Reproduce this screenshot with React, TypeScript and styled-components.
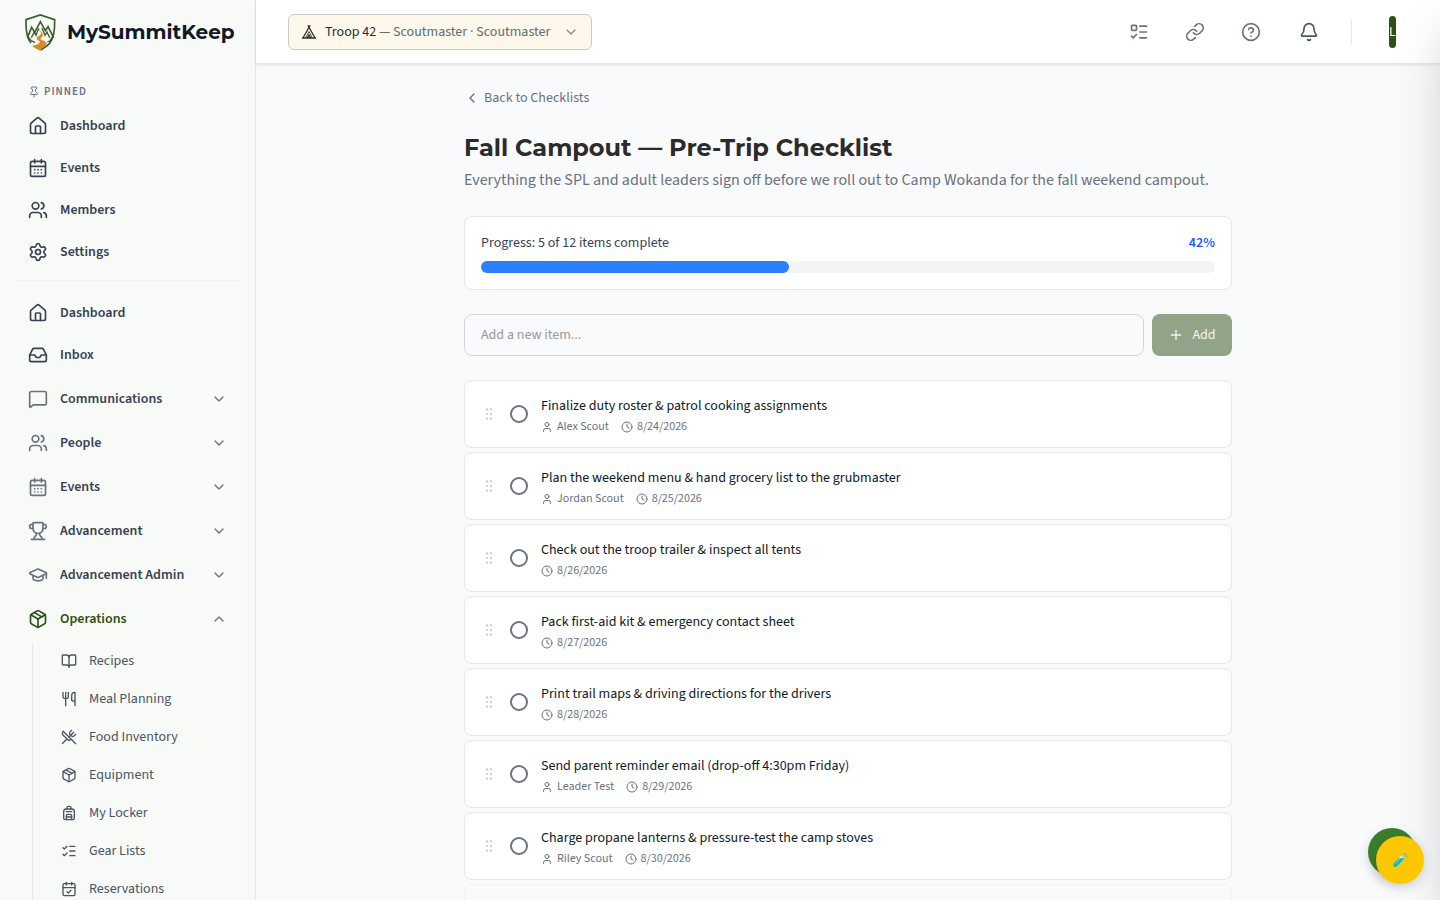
import React from "react";
import styled, { createGlobalStyle } from "styled-components";
import {
  Backpack, Bell, BookOpen, CalendarCheck, CalendarDays, ChevronDown, ChevronLeft, ChevronUp,
  CircleQuestionMark, Clock, GraduationCap, GripVertical, House, Inbox, Link as LinkIcon,
  ListChecks, ListTodo, MessageSquare, Package, Pin, Plus, Settings, Trophy, User, Users,
  Utensils, UtensilsCrossed,
} from "lucide-react";
import type { LucideIcon } from "lucide-react";

const bodyFont = `"Source Sans 3", "Noto Sans CJK SC", "Noto Sans", sans-serif`;
const headingFont = `Montserrat, Inter, sans-serif`;

const GlobalStyle = createGlobalStyle`
  *, *::before, *::after { box-sizing: border-box; }
  body { margin: 0; background: #f9fafb; font-family: ${bodyFont}; font-size: 14px; line-height: 20px; color: #101828; }
  button, input { font: inherit; color: inherit; }
  h1, p, ul { margin: 0; padding: 0; }
  ul { list-style: none; }
  a { color: inherit; text-decoration: none; }
  svg { flex-shrink: 0; display: block; }
`;

const Shell = styled.div`
  display: flex;
  height: 100vh;
  overflow: hidden;
`;

const Sidebar = styled.aside`
  display: flex;
  flex-direction: column;
  flex: 0 0 256px;
  background: #f8faf7;
  border-right: 1px solid #e5e7eb;
`;

const Brand = styled.a`
  display: flex;
  align-items: center;
  gap: 11px;
  flex: 0 0 64px;
  padding-left: 24px;
  font-family: ${headingFont};
  font-size: 20px;
  line-height: 28px;
  font-weight: 700;
  color: #101828;
`;

const Nav = styled.nav`
  flex: 1;
  min-height: 0;
  overflow-y: auto;
  scrollbar-width: none;
  padding: 20px 16px;
`;

const PinnedLabel = styled.div`
  display: flex;
  align-items: center;
  gap: 4px;
  padding-left: 12px;
  margin-bottom: 6px;
  font-size: 11px;
  line-height: 16px;
  font-weight: 600;
  letter-spacing: 1px;
  color: #6a7282;
`;

const NavList = styled.ul`
  display: flex;
  flex-direction: column;
  gap: 2px;
`;

const NavLink = styled.a`
  display: flex;
  align-items: center;
  gap: 12px;
  height: 40px;
  padding: 0 12px;
  font-weight: 600;
  color: #364153;
`;

const Divider = styled.hr`
  margin: 8px 0 12px;
  border: 0;
  border-top: 1px solid #f0f2f1;
`;

const GroupButton = styled.button<{ $open?: boolean }>`
  display: flex;
  align-items: center;
  gap: 12px;
  width: 100%;
  height: 44px;
  padding: 0 12px;
  border: 0;
  background: none;
  text-align: left;
  font-weight: 600;
  color: ${(p) => (p.$open ? "#2d5016" : "#364153")};

  svg { color: ${(p) => (p.$open ? "#2d5016" : "#6a7282")}; }
  svg:last-child { color: #6a7282; }
  span { flex: 1; }
`;

const GroupList = styled.div`
  margin-top: 2px;
`;

const SubList = styled(NavList)`
  margin: 2px 0 0 16px;
  padding-left: 16px;
  border-left: 1px solid #e5e7eb;
`;

const SubLink = styled.a`
  display: flex;
  align-items: center;
  gap: 12px;
  height: 36px;
  padding: 0 12px;
  color: #4a5565;
`;

const Page = styled.div`
  display: flex;
  flex-direction: column;
  flex: 1;
  min-width: 0;
`;

const Header = styled.header`
  display: flex;
  align-items: center;
  justify-content: space-between;
  flex: 0 0 64px;
  padding: 0 32px;
  background: #fff;
  border-bottom: 1px solid #e5e7eb;
  box-shadow: 0 1px 3px rgba(0, 0, 0, 0.1);
  z-index: 1;
`;

const TroopButton = styled.button`
  display: flex;
  align-items: center;
  gap: 8px;
  min-width: 304px;
  height: 36px;
  padding: 0 12px;
  border: 1px solid #c8cbc9;
  border-radius: 6px;
  background: #fdf8eb;
  color: #5f6f6b;
  text-align: left;

  span { flex: 1; }
  strong { font-weight: 400; color: #2b2b2b; }
  svg:last-child { color: #8a8a86; }
`;

const HeaderActions = styled.div`
  display: flex;
  align-items: center;
  gap: 16px;
`;

const IconButton = styled.button<{ $wide?: boolean }>`
  display: grid;
  place-items: center;
  width: ${(p) => (p.$wide ? 44 : 40)}px;
  height: 40px;
  padding: 0;
  border: 0;
  background: none;
  color: ${(p) => (p.$wide ? "#4a5565" : "#6a7282")};
`;

const Separator = styled.span`
  width: 1px;
  height: 24px;
  margin-left: 4px;
  background: #e5e7eb;
`;

const AccountButton = styled.button`
  padding: 0 12px 0 21px;
  border: 0;
  background: none;
`;

const Avatar = styled.span`
  display: flex;
  align-items: center;
  justify-content: center;
  width: 7px;
  height: 32px;
  border-radius: 4px;
  overflow: hidden;
  background: #2d5016;
  color: #fff;
`;

const Main = styled.main`
  flex: 1;
  min-height: 0;
  overflow-y: auto;
  scrollbar-width: none;
  padding: 24px 32px;
  background: #f9fafc;
`;

const Content = styled.div`
  display: flex;
  flex-direction: column;
  max-width: 768px;
  margin: 0 auto;
`;

const BackLink = styled.a`
  display: flex;
  align-items: center;
  align-self: flex-start;
  gap: 4px;
  color: #6a7282;
`;

const Title = styled.h1`
  margin-top: 24px;
  font-family: ${headingFont};
  font-size: 24px;
  line-height: 32px;
  font-weight: 700;
  color: #2b2b2b;
`;

const Subtitle = styled.p`
  margin-top: 4px;
  font-size: 16px;
  line-height: 24px;
  color: #6a7282;
`;

const ProgressCard = styled.section`
  margin-top: 24px;
  padding: 16px;
  border: 1px solid #e5e7eb;
  border-radius: 8px;
  background: #fff;
`;

const ProgressHead = styled.div`
  display: flex;
  justify-content: space-between;
  margin-bottom: 8px;
  color: #364153;

  strong { font-weight: 600; color: #155dfc; }
`;

const Track = styled.div`
  height: 12px;
  border-radius: 6px;
  background: #f3f4f6;
`;

const Fill = styled.div`
  height: 100%;
  border-radius: 6px;
  background: #2b7fff;
`;

const AddForm = styled.form`
  display: flex;
  gap: 8px;
  margin: 24px 0;
`;

const AddInput = styled.input`
  flex: 1;
  min-width: 0;
  height: 42px;
  padding: 0 16px;
  border: 1px solid #d1d5dc;
  border-radius: 8px;
  background: transparent;

  &::placeholder { color: #999; opacity: 1; }
`;

const AddButton = styled.button`
  display: flex;
  align-items: center;
  justify-content: center;
  gap: 8px;
  width: 80px;
  border: 0;
  border-radius: 8px;
  background: #91a488;
  color: #f3f5f2;
`;

const TaskList = styled.ul`
  display: flex;
  flex-direction: column;
  gap: 4px;
`;

const TaskRow = styled.li<{ $done?: boolean }>`
  display: flex;
  align-items: center;
  gap: 12px;
  height: 68px;
  padding: 0 16px;
  border: 1px solid ${(p) => (p.$done ? "#f0f2f4" : "#e5e7eb")};
  border-radius: 8px;
  background: ${(p) => (p.$done ? "#f9fafb" : "#fff")};

  > svg { color: #d1d5dc; }
`;

const Check = styled.input`
  appearance: none;
  flex: none;
  width: 18px;
  height: 18px;
  margin: 1px;
  border: 2px solid #6a7282;
  border-radius: 50%;
`;

const TaskBody = styled.div`
  display: flex;
  flex-direction: column;
  gap: 3px;
  padding-top: 3px;
`;

const Meta = styled.div`
  display: flex;
  gap: 12px;
  font-size: 12px;
  line-height: 16px;
  color: #6a7282;

  span { display: flex; align-items: center; gap: 4px; }
`;

const Drawer = styled.div`
  position: fixed;
  top: 0;
  bottom: 0;
  left: 100%;
  width: 384px;
  z-index: 5;
  box-shadow: 0 25px 50px -12px rgba(0, 0, 0, 0.25);
`;

const FloatingButton = styled.button<{ $back?: boolean }>`
  position: fixed;
  right: ${(p) => (p.$back ? 24 : 16)}px;
  bottom: ${(p) => (p.$back ? 24 : 16)}px;
  z-index: 6;
  display: grid;
  place-items: center;
  width: 48px;
  height: 48px;
  padding: 0;
  border: 0;
  border-radius: 50%;
  background: ${(p) => (p.$back ? "#3a7d2c" : "#fdc700")};
  box-shadow: 0 4px 12px rgba(0, 0, 0, 0.15);
`;

function Logo() {
  return (
    <svg width="32" height="38" viewBox="12 14 96 114" fill="none" stroke="#3b5f2a" aria-hidden="true">
      <path d="M33 104C22 92 17 70 18 34l43-14 43 14c1 36-4 58-16 72-8 9-17 14-26 19" strokeWidth="5" />
      <path d="m22 88 13-31 9 15 17-32 15 27 8-12 17 33" strokeWidth="5" />
      <path d="m34 88 9-17 5 10 8-21M66 60l9 21 6-10 8 17" strokeWidth="4" />
      <path d="m25 86 9 12 11 4M98 86l-9 12-7 3" strokeWidth="4" />
      <path d="M57 60c-2 9 10 11 5 18-3 5-15 8-11 15 3 5 12 5 7 11-4 5-14 6-22 8 7 6 15 11 26 15 0-9 21-13 17-24-3-8-18-7-17-12 1-4 9-7 6-15-2-6-10-8-11-16Z" fill="#d98a27" stroke="none" />
    </svg>
  );
}

function TeepeeIcon() {
  return (
    <svg width="16" height="16" viewBox="0 0 16 16" fill="none" stroke="#2b2b2b" aria-hidden="true">
      <path d="M9.200 1.200 2.200 13.500M6.800 1.200l7 12.300" strokeWidth="1.300" />
      <path d="M1 14h14" strokeWidth="1.500" />
      <path d="M8 7.500 4.800 13.500M8 7.500l3.200 6" strokeWidth=".8" />
      <path d="M8 10 5.800 13.800h1.400L8 12.300l.8 1.500h1.400Z" fill="#2b2b2b" strokeWidth=".4" />
    </svg>
  );
}

function TestTube() {
  return (
    <svg width="18" height="18" viewBox="0 0 18 18" aria-hidden="true">
      <path d="m10.500 4 3.500 3.300-7.800 8c-2.300 2.100-5.200-.7-3.200-3.300Z" fill="#d6eee0" />
      <path d="M7.800 7.200h5.900l-7.500 8c-2.300 2.200-5.200-.6-3.200-3.200Z" fill="#12b8a2" />
      <path d="m9 8-4.500 4.800" stroke="#6be0cc" strokeWidth="1" />
      <path d="m10 3.500 4.500 4.300" stroke="#9fc9b8" strokeWidth="1.300" strokeLinecap="round" />
      <circle cx="14.500" cy="3.500" r="1" fill="#2fc6a8" />
      <circle cx="16.200" cy="5.200" r=".7" fill="#2fc6a8" />
      <circle cx="12.700" cy="2.300" r=".6" fill="#2fc6a8" />
    </svg>
  );
}

type Entry = [string, LucideIcon];

const pinned: Entry[] = [["Dashboard", House], ["Events", CalendarDays], ["Members", Users], ["Settings", Settings]];
const primary: Entry[] = [["Dashboard", House], ["Inbox", Inbox]];
const groups: Entry[] = [
  ["Communications", MessageSquare],
  ["People", Users],
  ["Events", CalendarDays],
  ["Advancement", Trophy],
  ["Advancement Admin", GraduationCap],
  ["Operations", Package],
];
const operations: Entry[] = [
  ["Recipes", BookOpen],
  ["Meal Planning", Utensils],
  ["Food Inventory", UtensilsCrossed],
  ["Equipment", Package],
  ["My Locker", Backpack],
  ["Gear Lists", ListChecks],
  ["Reservations", CalendarCheck],
];

const tasks: { title: string; who?: string; due: string }[] = [
  { title: "Finalize duty roster & patrol cooking assignments", who: "Alex Scout", due: "8/24/2026" },
  { title: "Plan the weekend menu & hand grocery list to the grubmaster", who: "Jordan Scout", due: "8/25/2026" },
  { title: "Check out the troop trailer & inspect all tents", due: "8/26/2026" },
  { title: "Pack first-aid kit & emergency contact sheet", due: "8/27/2026" },
  { title: "Print trail maps & driving directions for the drivers", due: "8/28/2026" },
  { title: "Send parent reminder email (drop-off 4:30pm Friday)", who: "Leader Test", due: "8/29/2026" },
  { title: "Charge propane lanterns & pressure-test the camp stoves", who: "Riley Scout", due: "8/30/2026" },
];

function NavItems({ items }: { items: Entry[] }) {
  return (
    <NavList>
      {items.map(([label, Icon]) => (
        <li key={label}>
          <NavLink href="#"><Icon size={20} />{label}</NavLink>
        </li>
      ))}
    </NavList>
  );
}

export default function App() {
  const done = 5;
  const total = 12;
  const percent = Math.round((done / total) * 100);

  return (
    <>
      <GlobalStyle />
      <Shell>
        <Sidebar>
          <Brand href="#"><Logo />MySummitKeep</Brand>
          <Nav aria-label="Primary">
            <PinnedLabel><Pin size={12} />PINNED</PinnedLabel>
            <NavItems items={pinned} />
            <Divider />
            <NavItems items={primary} />
            <GroupList>
              {groups.map(([label, Icon]) => {
                const open = label === "Operations";
                return (
                  <GroupButton key={label} type="button" $open={open} aria-expanded={open}>
                    <Icon size={20} />
                    <span>{label}</span>
                    {open ? <ChevronUp size={16} /> : <ChevronDown size={16} />}
                  </GroupButton>
                );
              })}
            </GroupList>
            <SubList>
              {operations.map(([label, Icon]) => (
                <li key={label}>
                  <SubLink href="#"><Icon size={16} />{label}</SubLink>
                </li>
              ))}
            </SubList>
          </Nav>
        </Sidebar>
        <Page>
          <Header>
            <TroopButton type="button">
              <TeepeeIcon />
              <span><strong>Troop 42</strong> — Scoutmaster · Scoutmaster</span>
              <ChevronDown size={16} />
            </TroopButton>
            <HeaderActions>
              <IconButton type="button" aria-label="Tasks"><ListTodo size={20} /></IconButton>
              <IconButton type="button" aria-label="Links"><LinkIcon size={20} /></IconButton>
              <IconButton type="button" aria-label="Help"><CircleQuestionMark size={20} /></IconButton>
              <IconButton type="button" aria-label="Notifications" $wide><Bell size={20} /></IconButton>
              <Separator />
              <AccountButton type="button" aria-label="Account"><Avatar>L</Avatar></AccountButton>
            </HeaderActions>
          </Header>
          <Main>
            <Content>
              <BackLink href="#"><ChevronLeft size={16} />Back to Checklists</BackLink>
              <Title>Fall Campout — Pre-Trip Checklist</Title>
              <Subtitle>Everything the SPL and adult leaders sign off before we roll out to Camp Wokanda for the fall weekend campout.</Subtitle>
              <ProgressCard>
                <ProgressHead>
                  <span>Progress: {done} of {total} items complete</span>
                  <strong>{percent}%</strong>
                </ProgressHead>
                <Track role="progressbar" aria-label="Items complete" aria-valuenow={percent} aria-valuemin={0} aria-valuemax={100}>
                  <Fill style={{ width: `${percent}%` }} />
                </Track>
              </ProgressCard>
              <AddForm onSubmit={(e) => e.preventDefault()}>
                <AddInput type="text" placeholder="Add a new item..." aria-label="New item" />
                <AddButton type="submit"><Plus size={16} />Add</AddButton>
              </AddForm>
              <TaskList>
                {tasks.map((task, i) => (
                  <TaskRow key={task.title}>
                    <GripVertical size={16} />
                    <Check type="checkbox" id={`task-${i}`} />
                    <TaskBody>
                      <label htmlFor={`task-${i}`}>{task.title}</label>
                      <Meta>
                        {task.who && <span><User size={12} />{task.who}</span>}
                        <span><Clock size={12} />{task.due}</span>
                      </Meta>
                    </TaskBody>
                  </TaskRow>
                ))}
                <TaskRow $done />
              </TaskList>
            </Content>
          </Main>
        </Page>
      </Shell>
      <Drawer aria-hidden="true" />
      <FloatingButton type="button" aria-label="Quick actions" $back />
      <FloatingButton type="button" aria-label="Test tools"><TestTube /></FloatingButton>
    </>
  );
}
